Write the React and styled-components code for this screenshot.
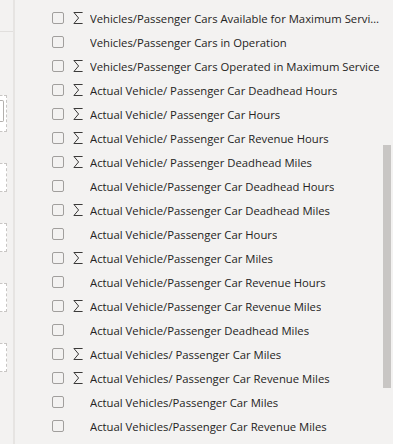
import React from 'react';
import styled, { createGlobalStyle } from 'styled-components';

const fields = [
  { name: 'Vehicles/Passenger Capacity (Seated plus Standing)', sum: true },
  { name: 'Vehicles/Passenger Cars Available for Maximum Service', sum: true },
  { name: 'Vehicles/Passenger Cars in Operation', sum: false },
  { name: 'Vehicles/Passenger Cars Operated in Maximum Service', sum: true },
  { name: 'Actual Vehicle/ Passenger Car Deadhead Hours', sum: true },
  { name: 'Actual Vehicle/ Passenger Car Hours', sum: true },
  { name: 'Actual Vehicle/ Passenger Car Revenue Hours', sum: true },
  { name: 'Actual Vehicle/ Passenger Deadhead Miles', sum: true },
  { name: 'Actual Vehicle/Passenger Car Deadhead Hours', sum: false },
  { name: 'Actual Vehicle/Passenger Car Deadhead Miles', sum: true },
  { name: 'Actual Vehicle/Passenger Car Hours', sum: false },
  { name: 'Actual Vehicle/Passenger Car Miles', sum: true },
  { name: 'Actual Vehicle/Passenger Car Revenue Hours', sum: false },
  { name: 'Actual Vehicle/Passenger Car Revenue Miles', sum: true },
  { name: 'Actual Vehicle/Passenger Deadhead Miles', sum: false },
  { name: 'Actual Vehicles/ Passenger Car Miles', sum: true },
  { name: 'Actual Vehicles/ Passenger Car Revenue Miles', sum: true },
  { name: 'Actual Vehicles/Passenger Car Miles', sum: false },
  { name: 'Actual Vehicles/Passenger Car Revenue Miles', sum: false },
];

// 합계 아이콘
const Sigma = () => (
  <svg width="10" height="12" viewBox="0 0 10 12" fill="none">
    <path
      d="M0.8 0.5H9.6M1 0.6L5.6 6L1 11.4M0.8 11.5H9.6"
      stroke="#3b3a39"
      strokeWidth="1"
    />
  </svg>
);

export default function App() {
  return (
    <>
      <GlobalStyle />
      <Page>
        <SidePane>
          <SideHeader />
          <WellSlot $solid />
          <WellSlot />
          <WellSlot />
          <WellSlot />
          <WellSlot />
        </SidePane>
        <FieldsPane>
          <FieldList>
            {fields.map((f, i) => (
              <FieldRow key={f.name} $peek={i === 0}>
                <CheckBox />
                <SumSlot>{f.sum && <Sigma />}</SumSlot>
                <FieldName>{f.name}</FieldName>
              </FieldRow>
            ))}
          </FieldList>
          <ScrollThumb />
        </FieldsPane>
      </Page>
    </>
  );
}

const GlobalStyle = createGlobalStyle`
  html, body {
    margin: 0;
    padding: 0;
    background: #f3f2f1;
  }
  body {
    font-family: "Open Sans", "Noto Sans", sans-serif;
    color: #252423;
  }
`;

const Page = styled.div`
  display: flex;
  width: 393px;
  height: 444px;
  overflow: hidden;
  background: #f3f2f1;
`;

// 왼쪽 필드 웰 영역 (잘려서 일부만 보임)
const SidePane = styled.div`
  width: 13px;
  flex-shrink: 0;
  border-right: 2px solid #e6e4e2;
  display: flex;
  flex-direction: column;
  align-items: flex-end;
  padding-right: 6px;
  box-sizing: content-box;
  margin-left: -6px;
`;

const SideHeader = styled.div`
  align-self: stretch;
  height: 31px;
  border-bottom: 1px solid #e1dfdd;
  margin-right: -6px;
`;

const WellSlot = styled.div`
  width: 12px;
  height: ${p => (p.$solid ? '37px' : '29px')};
  margin-top: ${p => (p.$solid ? '63px' : '31px')};
  border: 1px dashed #c8c6c4;
  background: #ffffff;
  box-sizing: border-box;
  flex-shrink: 0;
  position: relative;

  &::after {
    content: '';
    display: ${p => (p.$solid ? 'block' : 'none')};
    position: absolute;
    right: 2px;
    top: 4px;
    width: 8px;
    height: 20px;
    border: 1px solid #b3b0ad;
    border-left: none;
    border-radius: 0 2px 2px 0;
  }
`;

const FieldsPane = styled.div`
  position: relative;
  flex: 1;
  overflow: hidden;
`;

const FieldList = styled.div`
  display: flex;
  flex-direction: column;
  margin-top: -18px;
  padding-left: 37px;
`;

const FieldRow = styled.div`
  display: flex;
  align-items: center;
  height: 24px;
  flex-shrink: 0;
  box-sizing: border-box;
  padding-bottom: ${p => (p.$peek ? '6px' : '0')};
`;

const CheckBox = styled.div`
  width: 12px;
  height: 12px;
  border: 1px solid #a19f9d;
  border-radius: 2px;
  box-sizing: border-box;
  flex-shrink: 0;
`;

const SumSlot = styled.span`
  display: flex;
  align-items: center;
  width: 26px;
  height: 12px;
  padding-left: 9px;
  box-sizing: border-box;
  flex-shrink: 0;
`;

const FieldName = styled.span`
  font-size: 11.3px;
  white-space: nowrap;
  overflow: hidden;
  text-overflow: ellipsis;
  max-width: 291px;
`;

const ScrollThumb = styled.div`
  position: absolute;
  right: 2px;
  top: 145px;
  width: 8px;
  height: 243px;
  background: #c8c6c4;
`;
